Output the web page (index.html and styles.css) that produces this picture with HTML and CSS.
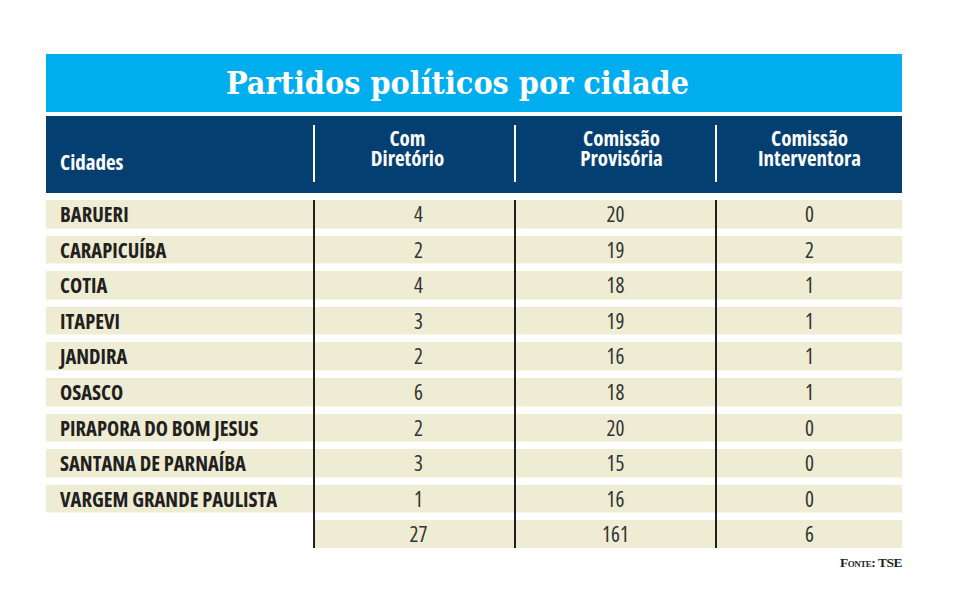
FILE: index.html
```html
<!DOCTYPE html>
<html lang="pt-BR">
<head>
    <meta charset="UTF-8">
    <meta name="viewport" content="width=device-width, initial-scale=1.0">
    <title>Partidos políticos por cidade</title>
    <link rel="stylesheet" href="styles.css">
</head>
<body>
    <div class="infografico">
        <h1 class="titulo">Partidos políticos por cidade</h1>

        <div class="cabecalho">
            <div class="cab cab-cidades">Cidades</div>
            <div class="cab cab-diretorio">Com<br>Diretório</div>
            <div class="cab cab-provisoria">Comissão<br>Provisória</div>
            <div class="cab cab-interventora">Comissão<br>Interventora</div>
        </div>

        <div class="tabela">
            <div class="cel cidade">BARUERI</div>
            <div class="cel num n2">4</div>
            <div class="cel num">20</div>
            <div class="cel num">0</div>

            <div class="cel cidade">CARAPICUÍBA</div>
            <div class="cel num n2">2</div>
            <div class="cel num">19</div>
            <div class="cel num">2</div>

            <div class="cel cidade">COTIA</div>
            <div class="cel num n2">4</div>
            <div class="cel num">18</div>
            <div class="cel num">1</div>

            <div class="cel cidade">ITAPEVI</div>
            <div class="cel num n2">3</div>
            <div class="cel num">19</div>
            <div class="cel num">1</div>

            <div class="cel cidade">JANDIRA</div>
            <div class="cel num n2">2</div>
            <div class="cel num">16</div>
            <div class="cel num">1</div>

            <div class="cel cidade">OSASCO</div>
            <div class="cel num n2">6</div>
            <div class="cel num">18</div>
            <div class="cel num">1</div>

            <div class="cel cidade">PIRAPORA DO BOM JESUS</div>
            <div class="cel num n2">2</div>
            <div class="cel num">20</div>
            <div class="cel num">0</div>

            <div class="cel cidade">SANTANA DE PARNAÍBA</div>
            <div class="cel num n2">3</div>
            <div class="cel num">15</div>
            <div class="cel num">0</div>

            <div class="cel cidade">VARGEM GRANDE PAULISTA</div>
            <div class="cel num n2">1</div>
            <div class="cel num">16</div>
            <div class="cel num">0</div>

            <!-- linha de total -->
            <div class="cel vazio"></div>
            <div class="cel num n2 total">27</div>
            <div class="cel num total">161</div>
            <div class="cel num total">6</div>
        </div>

        <p class="fonte">Fonte: TSE</p>
    </div>
</body>
</html>
```

FILE: styles.css
```css
body {
    margin: 0;
    background-color: #fff;
    font-family: "Open Sans", "DejaVu Sans Condensed", sans-serif;
    font-stretch: 75%;
    color: #231f20;
}

.infografico {
    width: 856px;
    padding: 54px 0 0 46px;
}

.titulo {
    margin: 0;
    height: 58px;
    background-color: #00aeef;
    color: #fff;
    font-family: "DejaVu Serif Condensed", "DejaVu Serif", serif;
    font-stretch: normal;
    font-weight: bold;
    font-size: 32px;
    line-height: 58px;
    text-align: center;
    padding-right: 33px;
    box-sizing: border-box;
}

.cabecalho {
    margin-top: 4px;
    height: 77px;
    background-color: #043f72;
    display: grid;
    grid-template-columns: 267px 201px 201px 187px;
    color: #fff;
    font-weight: bold;
    font-size: 21px;
    line-height: 20px;
}

.cab {
    display: flex;
    align-items: flex-end;
    justify-content: center;
    text-align: center;
    margin: 9px 0 11px;
    padding-bottom: 14px;
    border-left: 2px solid #fff;
}

.cab-cidades {
    justify-content: flex-start;
    padding-left: 14px;
    padding-bottom: 10px;
    border-left: none;
}

.cab-diretorio {
    padding-right: 14px;
}

.cab-provisoria {
    padding-left: 12px;
}

.tabela {
    margin-top: 7px;
    display: grid;
    grid-template-columns: 267px 201px 201px 187px;
    grid-auto-rows: 35.6px;
    font-size: 21px;
}

.cel {
    display: flex;
    align-items: flex-start;
    line-height: 28px;
    background-color: #eeecd3;
    box-shadow: inset 0 -7.6px 0 #fff;
}

.cidade {
    font-weight: bold;
    font-size: 20.6px;
    padding-left: 14px;
}

.num {
    justify-content: center;
    border-left: 2px solid #231f20;
    color: #333;
}

.n2 {
    padding-left: 8px;
}

.total {
    height: 28px;
    box-shadow: none;
}

.vazio {
    background: none;
    box-shadow: none;
}

.fonte {
    margin: -1px 0 0;
    line-height: 15px;
    text-align: right;
    font-family: "Liberation Serif", serif;
    font-stretch: normal;
    font-weight: bold;
    font-variant: small-caps;
    font-size: 13.5px;
    letter-spacing: -0.5px;
}
```
